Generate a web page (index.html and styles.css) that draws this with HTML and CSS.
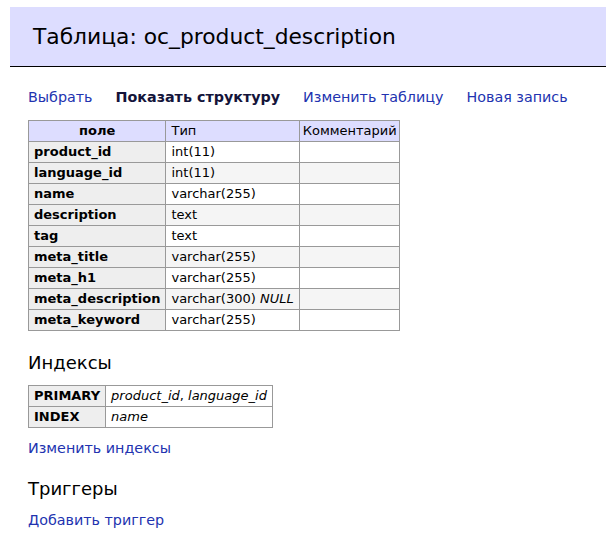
FILE: index.html
```html
<!DOCTYPE html>
<html lang="ru">
<head>
	<meta charset="UTF-8">
	<title>Таблица: oc_product_description</title>
	<link rel="stylesheet" href="styles.css">
</head>
<body>
	<div class="content">
		<h2>Таблица: oc_product_description</h2>
		<p class="links">
			<a href="javascript:;">Выбрать</a>
			<a href="javascript:;" class="active">Показать структуру</a>
			<a href="javascript:;">Изменить таблицу</a>
			<a href="javascript:;">Новая запись</a>
		</p>
		<table class="grid fields">
			<thead>
				<tr><th class="name">поле</th><td>Тип</td><td class="comment">Комментарий</td></tr>
			</thead>
			<tbody>
				<tr><th>product_id</th><td>int(11)</td><td></td></tr>
				<tr class="odd"><th>language_id</th><td>int(11)</td><td></td></tr>
				<tr><th>name</th><td>varchar(255)</td><td></td></tr>
				<tr class="odd"><th>description</th><td>text</td><td></td></tr>
				<tr><th>tag</th><td>text</td><td></td></tr>
				<tr class="odd"><th>meta_title</th><td>varchar(255)</td><td></td></tr>
				<tr><th>meta_h1</th><td>varchar(255)</td><td></td></tr>
				<tr class="odd"><th>meta_description</th><td>varchar(300) <i>NULL</i></td><td></td></tr>
				<tr><th>meta_keyword</th><td>varchar(255)</td><td></td></tr>
			</tbody>
		</table>

		<h3>Индексы</h3>
		<table class="grid indexes">
			<tbody>
				<tr><th>PRIMARY</th><td><i>product_id</i>, <i>language_id</i></td></tr>
				<tr><th>INDEX</th><td><i>name</i></td></tr>
			</tbody>
		</table>
		<p class="links"><a href="javascript:;">Изменить индексы</a></p>

		<h3>Триггеры</h3>
		<p class="links"><a href="javascript:;">Добавить триггер</a></p>
	</div>
</body>
</html>
```

FILE: styles.css
```css
body{
	margin:0;
	font:14.3px/18px "DejaVu Sans", Verdana, sans-serif;
	color:#000;
}
.content{
	padding:7px 8px 0 28px;
}
a{
	color:#2233b0;
	text-decoration:none;
}
h2{
	margin:0 0 0 -18px;
	padding:16px 0 16px 23px;
	font-size:21.8px;
	line-height:27px;
	font-weight:normal;
	background:#ddf;
	border-bottom:1px solid #000;
}
h3{
	margin:21px 0 0;
	font-size:18px;
	line-height:22px;
	font-weight:normal;
}
.links{
	display:flex;
	gap:23px;
	margin:0;
}
h2 + .links{
	margin:21px 0 14px;
}
.links .active{
	color:#14143a;
	font-weight:bold;
}
.grid{
	border-collapse:collapse;
	border:1px solid #999;
	font-size:13px;
	line-height:16px;
}
.grid th,
.grid td{
	border:1px solid #999;
	padding:2px 5px;
	text-align:left;
	vertical-align:top;
	white-space:nowrap;
}
.grid th{
	background:#eee;
}
.grid thead th,
.grid thead td{
	background:#ddf;
}
.grid thead th.name{
	text-align:center;
}
.grid thead td.comment{
	padding:2px 2px 2px 3px;
}
.grid tr.odd td{
	background:#f5f5f5;
}
.indexes{
	margin-top:11px;
}
.indexes + .links{
	margin-top:11px;
}
h3 + .links{
	margin-top:11px;
}
```
